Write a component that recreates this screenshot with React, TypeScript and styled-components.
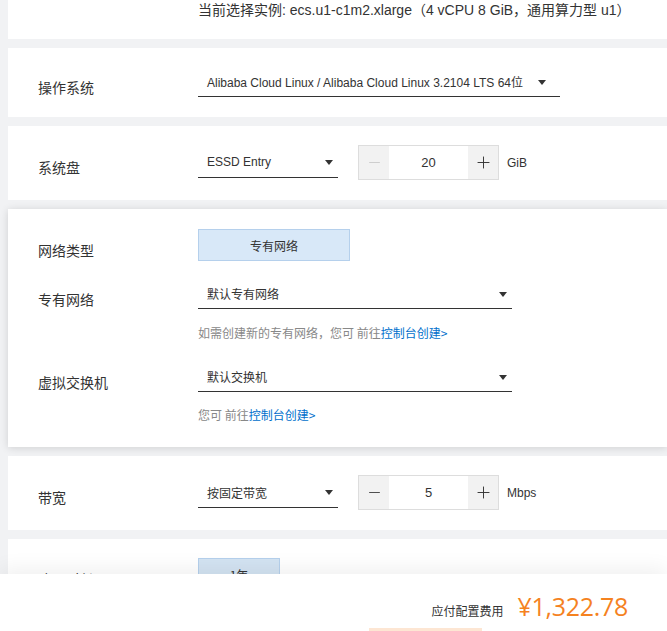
import styled, { createGlobalStyle } from 'styled-components';
import { Minus, Plus } from 'lucide-react';

const GlobalStyle = createGlobalStyle`
  html, body {
    margin: 0;
    padding: 0;
    background: #f1f2f4;
  }
  * {
    box-sizing: border-box;
  }
`;

const FONT = `"Liberation Sans", Arial, "Noto Sans CJK SC", sans-serif`;

function App() {
  return (
    <>
      <GlobalStyle />
      <Page>
        <Main>
          <SummaryCard>
            <Summary>当前选择实例: ecs.u1-c1m2.xlarge（4 vCPU 8 GiB，通用算力型 u1）</Summary>
          </SummaryCard>

          <Card>
            <Row>
              <Label>操作系统</Label>
              <Select $auto>
                <span>Alibaba Cloud Linux / Alibaba Cloud Linux 3.2104 LTS 64位</span>
                <Caret />
              </Select>
            </Row>
          </Card>

          <Card>
            <Row>
              <Label>系统盘</Label>
              <Select $width={140}>
                <span>ESSD Entry</span>
                <Caret />
              </Select>
              <Stepper>
                <StepButton $disabled>
                  <Minus size={17} strokeWidth={1.2} />
                </StepButton>
                <StepValue>20</StepValue>
                <StepButton>
                  <Plus size={19} strokeWidth={1.2} />
                </StepButton>
              </Stepper>
              <Unit>GiB</Unit>
            </Row>
          </Card>

          <Card $raised>
            <Row>
              <Label>网络类型</Label>
              <OptionButton $width={152}>专有网络</OptionButton>
            </Row>
            <Row $gap={18}>
              <Label>专有网络</Label>
              <Select $width={314}>
                <span>默认专有网络</span>
                <Caret />
              </Select>
            </Row>
            <Hint $gap={15}>
              如需创建新的专有网络，您可 前往<HintLink>控制台创建&gt;</HintLink>
            </Hint>
            <Row $gap={20}>
              <Label>虚拟交换机</Label>
              <Select $width={314}>
                <span>默认交换机</span>
                <Caret />
              </Select>
            </Row>
            <Hint $gap={14}>
              您可 前往<HintLink>控制台创建&gt;</HintLink>
            </Hint>
          </Card>

          <Card>
            <Row>
              <Label>带宽</Label>
              <Select $width={140}>
                <span>按固定带宽</span>
                <Caret />
              </Select>
              <Stepper>
                <StepButton>
                  <Minus size={17} strokeWidth={1.2} />
                </StepButton>
                <StepValue>5</StepValue>
                <StepButton>
                  <Plus size={19} strokeWidth={1.2} />
                </StepButton>
              </Stepper>
              <Unit>Mbps</Unit>
            </Row>
          </Card>

          <Card>
            <Row>
              <Label>购买时长</Label>
              <OptionButton $width={82} $muted>1年</OptionButton>
            </Row>
          </Card>
        </Main>

        <Footer>
          <PriceRow>
            <PriceLabel>应付配置费用</PriceLabel>
            <Price>¥1,322.78</Price>
          </PriceRow>
          <ActionRow>
            <CartButton>加入清单</CartButton>
          </ActionRow>
        </Footer>
      </Page>
    </>
  );
}

export default App;

const Page = styled.div`
  height: 100vh;
  display: flex;
  flex-direction: column;
  overflow: hidden;
  font-family: ${FONT};
  color: #333;
`;

const Main = styled.div`
  flex: 1;
  min-height: 0;
  overflow: hidden;
  display: flex;
  flex-direction: column;
  gap: 9px;
  padding-left: 8px;
`;

const SummaryCard = styled.div`
  flex: none;
  background: #fff;
  height: 39px;
  padding-left: 190px;
`;

const Summary = styled.div`
  font-size: 14px;
  line-height: 20px;
  color: #333;
  white-space: nowrap;
`;

const Card = styled.div<{ $raised?: boolean }>`
  flex: none;
  background: #fff;
  padding: ${(p) => (p.$raised ? '20px 0 23px 30px' : '19px 0 20px 30px')};
  box-shadow: ${(p) => (p.$raised ? '0 1px 8px rgba(0, 0, 0, 0.14)' : 'none')};
  position: relative;
  z-index: ${(p) => (p.$raised ? 1 : 0)};
`;

const Row = styled.div<{ $gap?: number }>`
  display: flex;
  align-items: center;
  margin-top: ${(p) => p.$gap ?? 0}px;
`;

const Label = styled.div`
  flex: none;
  width: 160px;
  padding-top: 9px;
  font-size: 14px;
  line-height: 20px;
  color: #333;
  font-family: "Noto Sans CJK SC", sans-serif;
`;

const Select = styled.div<{ $width?: number; $auto?: boolean }>`
  flex: none;
  width: ${(p) => (p.$auto ? 'auto' : `${p.$width}px`)};
  height: 30px;
  display: flex;
  align-items: center;
  justify-content: ${(p) => (p.$auto ? 'flex-start' : 'space-between')};
  gap: 15px;
  padding: 0 ${(p) => (p.$auto ? 14 : 5)}px 0 9px;
  border-bottom: 1px solid #333;
  font-size: 12px;
  color: #333;
  white-space: nowrap;
`;

const Caret = styled.i`
  flex: none;
  width: 0;
  height: 0;
  border-left: 4px solid transparent;
  border-right: 4px solid transparent;
  border-top: 5px solid #333;
  margin-top: 1px;
`;

const Stepper = styled.div`
  flex: none;
  display: flex;
  height: 35px;
  margin-left: 20px;
  border: 1px solid #ddd;
`;

const StepButton = styled.div<{ $disabled?: boolean }>`
  width: 30px;
  display: flex;
  align-items: center;
  justify-content: center;
  background: #f2f2f2;
  color: ${(p) => (p.$disabled ? '#c8c8c8' : '#333')};
`;

const StepValue = styled.div`
  width: 79px;
  display: flex;
  align-items: center;
  justify-content: center;
  background: #fff;
  font-size: 13px;
  color: #333;
`;

const Unit = styled.span`
  margin-left: 8px;
  font-size: 12px;
  color: #333;
`;

const OptionButton = styled.div<{ $width: number; $muted?: boolean }>`
  flex: none;
  width: ${(p) => p.$width}px;
  height: 32px;
  display: flex;
  align-items: center;
  justify-content: center;
  background: ${(p) => (p.$muted ? '#d3e3f2' : '#d8e8f8')};
  border: 1px solid #b5d0ec;
  font-size: 12px;
  color: #333;
  font-family: "Noto Sans CJK SC", sans-serif;
`;

const Hint = styled.div<{ $gap: number }>`
  margin: ${(p) => p.$gap}px 0 0 160px;
  font-size: 12px;
  line-height: 18px;
  color: #888;
  font-family: "Noto Sans CJK SC", sans-serif;
`;

const HintLink = styled.a`
  color: #0070cc;
  text-decoration: none;
  cursor: pointer;
`;

const Footer = styled.div`
  flex: none;
  height: 57px;
  background: #fff;
  display: flex;
  flex-direction: column;
  align-items: flex-end;
  padding: 16px 39px 0 0;
  box-shadow: 0 -6px 20px rgba(0, 0, 0, 0.06);
  position: relative;
  z-index: 2;
`;

const PriceRow = styled.div`
  display: flex;
  align-items: center;
  gap: 14px;
  height: 32px;
`;

const PriceLabel = styled.span`
  font-size: 12px;
  color: #333;
  font-family: "Noto Sans CJK SC", sans-serif;
  margin-top: 8px;
`;

const Price = styled.span`
  font-size: 25px;
  color: #f5821f;
  font-family: "Open Sans", "Liberation Sans", sans-serif;
  letter-spacing: -0.3px;
`;

const ActionRow = styled.div`
  display: flex;
  margin-top: 6px;
  margin-right: 146px;
`;

const CartButton = styled.button`
  width: 113px;
  height: 36px;
  border: none;
  background: #fde6d3;
  color: #f5821f;
  font-size: 14px;
  font-family: "Noto Sans CJK SC", sans-serif;
`;
